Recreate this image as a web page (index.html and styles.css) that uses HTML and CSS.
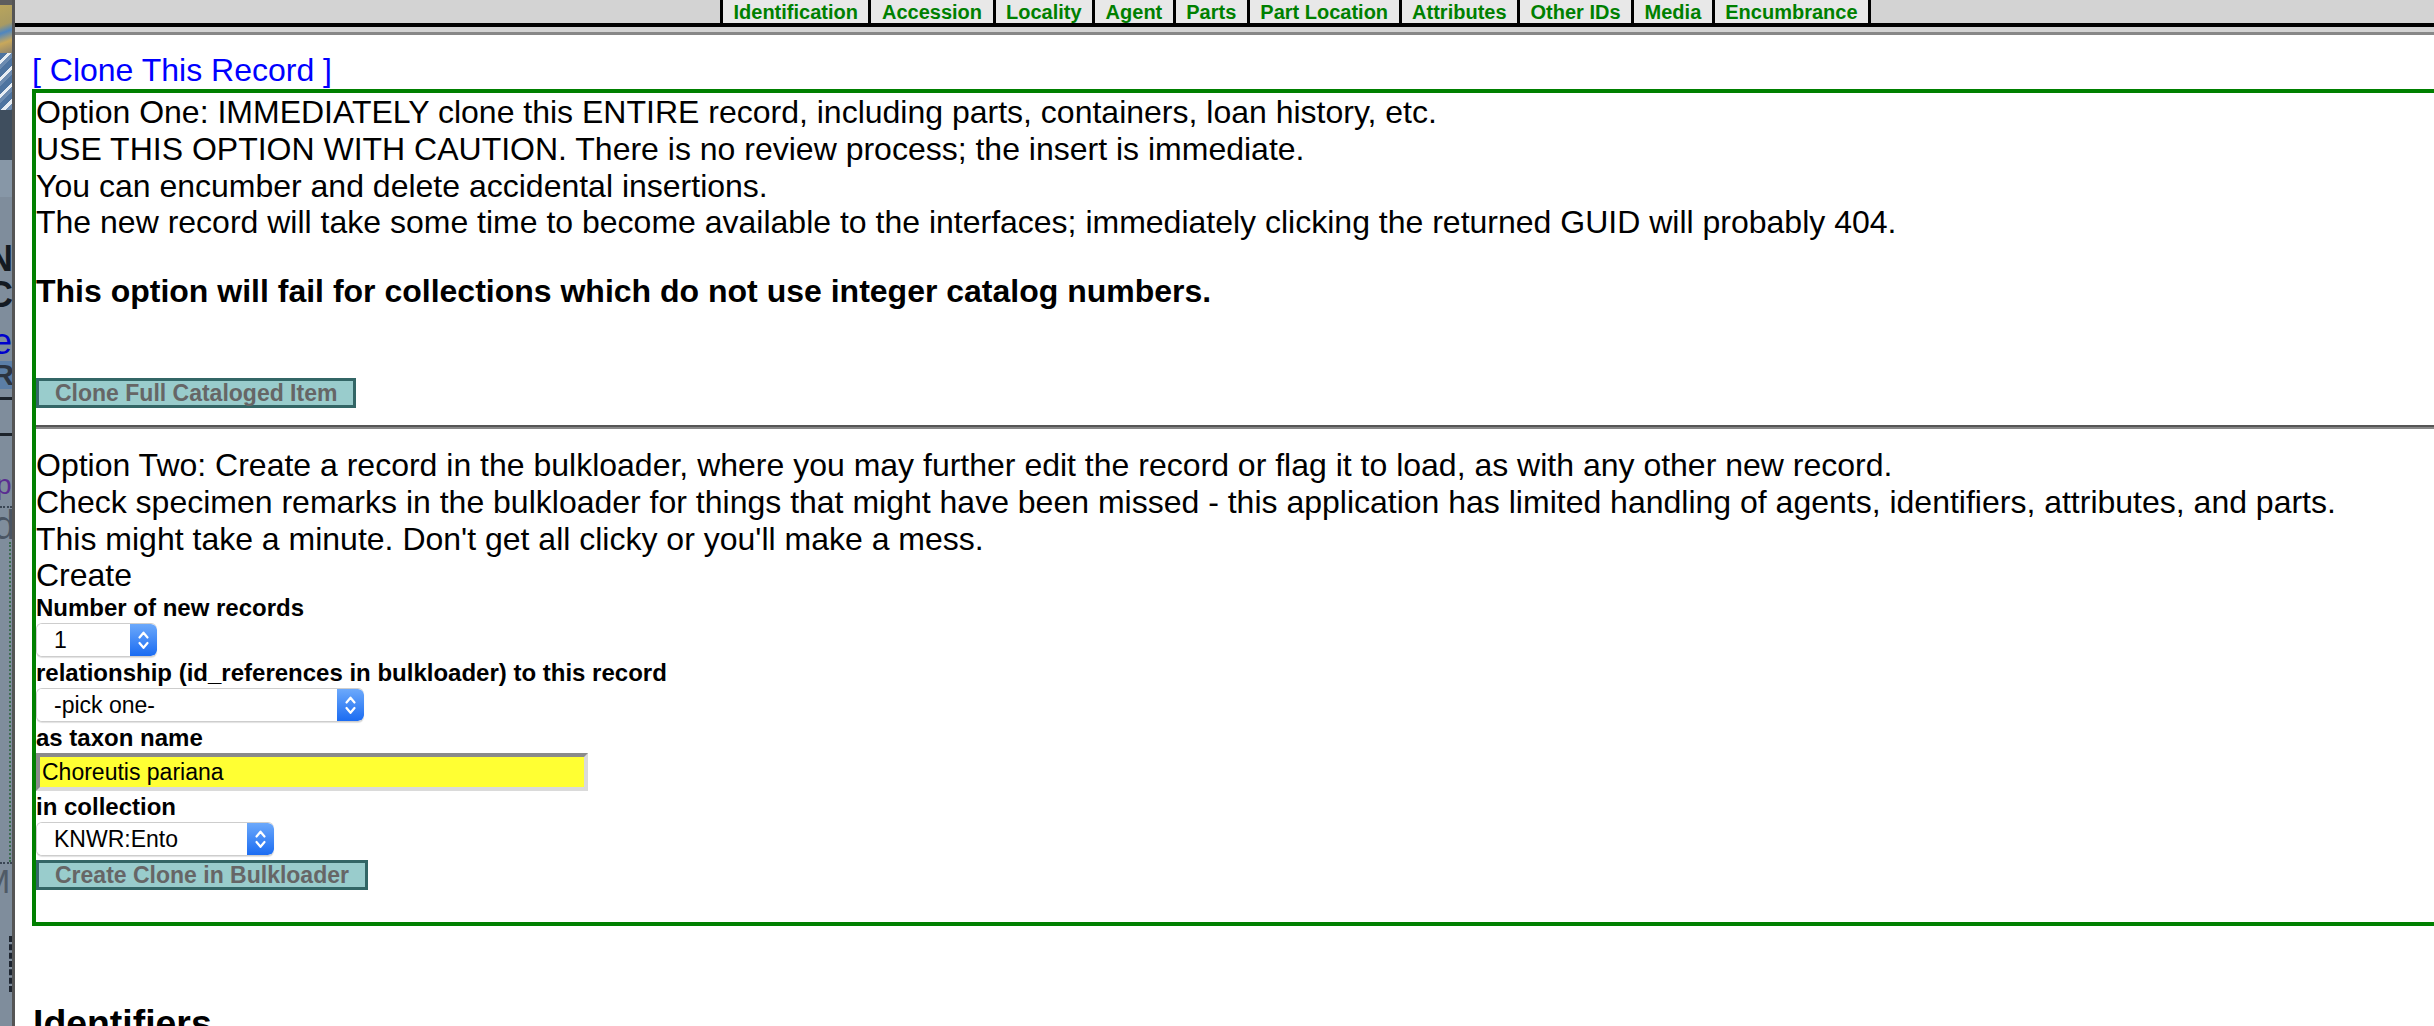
FILE: index.html
```html
<!DOCTYPE html>
<html lang="en">
<head>
<meta charset="utf-8">
<title>Clone This Record</title>
<link rel="stylesheet" href="styles.css">
</head>
<body>
<div class="under">
  <div class="u-dark"></div>
  <div class="u-photo1"></div>
  <div class="u-photo2"></div>
  <div class="u-slate"></div>
  <div class="u-band"></div>
  <div class="u-text">
    <div class="u-h">N</div>
    <div class="u-h">C</div>
    <div class="u-link">e</div>
    <div class="u-btn">R</div>
    <div class="u-rule"></div>
    <div class="u-rule u-rule2"></div>
    <div class="u-xp">xp</div>
    <div class="u-dots"></div>
    <div class="u-d">d</div>
    <div class="u-vdots"></div>
    <div class="u-dots u-dots2"></div>
    <div class="u-m">M</div>
    <div class="u-dash"></div>
  </div>
</div>
<div class="modal">
  <div class="topbar">
    <nav class="tabs">
      <a class="tab" href="#">Identification</a>
      <a class="tab" href="#">Accession</a>
      <a class="tab" href="#">Locality</a>
      <a class="tab" href="#">Agent</a>
      <a class="tab" href="#">Parts</a>
      <a class="tab" href="#">Part Location</a>
      <a class="tab" href="#">Attributes</a>
      <a class="tab" href="#">Other IDs</a>
      <a class="tab" href="#">Media</a>
      <a class="tab" href="#">Encumbrance</a>
    </nav>
  </div>
  <div class="content">
    <a class="clone-link" href="#">[ Clone This Record ]</a>
    <div class="box">
      <div class="text">
        Option One: IMMEDIATELY clone this ENTIRE record, including parts, containers, loan history, etc.<br>
        USE THIS OPTION WITH CAUTION. There is no review process; the insert is immediate.<br>
        You can encumber and delete accidental insertions.<br>
        The new record will take some time to become available to the interfaces; immediately clicking the returned GUID will probably 404.
      </div>
      <p class="warn">This option will fail for collections which do not use integer catalog numbers.</p>
      <form class="form-one">
        <button type="button" class="btn">Clone Full Cataloged Item</button>
      </form>
      <hr class="sep">
      <div class="text">
        Option Two: Create a record in the bulkloader, where you may further edit the record or flag it to load, as with any other new record.<br>
        Check specimen remarks in the bulkloader for things that might have been missed - this application has limited handling of agents, identifiers, attributes, and parts.<br>
        This might take a minute. Don't get all clicky or you'll make a mess.<br>
        Create
      </div>
      <form class="form-two">
        <label class="lbl" for="num">Number of new records</label>
        <span class="select w-num">
          <select id="num" class="select-el"><option>1</option></select>
          <span class="stepper"><svg viewBox="0 0 27 32" width="27" height="32"><path d="M9.5 13.5 L13.5 8.7 L17.5 13.5"/><path d="M9.5 19 L13.5 23.8 L17.5 19"/></svg></span>
        </span>
        <label class="lbl" for="rel">relationship (id_references in bulkloader) to this record</label>
        <span class="select w-rel">
          <select id="rel" class="select-el"><option>-pick one-</option></select>
          <span class="stepper"><svg viewBox="0 0 27 32" width="27" height="32"><path d="M9.5 13.5 L13.5 8.7 L17.5 13.5"/><path d="M9.5 19 L13.5 23.8 L17.5 19"/></svg></span>
        </span>
        <label class="lbl" for="taxon">as taxon name</label>
        <input id="taxon" class="taxon" type="text" value="Choreutis pariana">
        <label class="lbl" for="coll">in collection</label>
        <span class="select w-coll">
          <select id="coll" class="select-el"><option>KNWR:Ento</option></select>
          <span class="stepper"><svg viewBox="0 0 27 32" width="27" height="32"><path d="M9.5 13.5 L13.5 8.7 L17.5 13.5"/><path d="M9.5 19 L13.5 23.8 L17.5 19"/></svg></span>
        </span>
        <button type="button" class="btn btn-two">Create Clone in Bulkloader</button>
      </form>
    </div>
    <h3 class="section">Identifiers</h3>
  </div>
</div>
</body>
</html>
```

FILE: styles.css
```css
html, body {
  margin: 0;
  padding: 0;
}

body {
  display: flex;
  height: 1026px;
  overflow: hidden;
  background: #fff;
  color: #000;
  font-family: "Liberation Sans", Arial, sans-serif;
  font-size: 32px;
  line-height: 1.15;
}

/* ---------- strip of the page underneath the modal ---------- */
.under {
  flex: none;
  width: 12px;
  overflow: hidden;
  display: flex;
  flex-direction: column;
  background: #7f8d9c;
}

.u-dark { height: 5px; background: #5e5e5e; flex: none; }
.u-photo1 {
  height: 48px;
  flex: none;
  background: linear-gradient(160deg, #b9a55c 0%, #a89a62 40%, #4f86c0 55%, #c9a85a 75%, #8a8270 100%);
}
.u-photo2 {
  height: 57px;
  flex: none;
  background: repeating-linear-gradient(135deg, #4e74a0 0 5px, #e7edf3 5px 8px, #6c8bb0 8px 12px);
}
.u-slate { height: 50px; flex: none; background: #3f4e5e; }
.u-band { height: 37px; flex: none; background: #8797a7; }

.u-text {
  flex: 1;
  padding-top: 44px;
  font-weight: bold;
}
.u-h {
  width: 26px;
  margin-left: -13px;
  font-size: 36px;
  line-height: 36px;
  color: #141a22;
}
.u-link {
  width: 20px;
  margin-left: -8px;
  margin-top: 14px;
  font-weight: normal;
  font-size: 36px;
  line-height: 30px;
  color: #0000cc;
}
.u-btn {
  width: 24px;
  margin-left: -10px;
  margin-top: 4px;
  height: 28px;
  background: #5b7ea6;
  color: #2b3440;
  font-size: 30px;
  line-height: 28px;
  text-align: right;
}
.u-rule { height: 3px; margin-top: 8px; background: #1c232b; }
.u-rule2 { margin-top: 33px; }
.u-xp {
  width: 30px;
  margin-left: -18px;
  margin-top: 36px;
  font-weight: normal;
  font-size: 28px;
  line-height: 26px;
  color: #5a2d91;
}
.u-dots {
  height: 0;
  margin-top: 8px;
  border-top: 2px dotted #3a4654;
}
.u-d {
  width: 20px;
  margin-left: -7px;
  font-weight: normal;
  font-size: 40px;
  line-height: 34px;
  color: #4a5563;
}
.u-vdots {
  height: 320px;
  margin-left: 9px;
  border-left: 2px dotted #3b6d4f;
}
.u-dots2 { margin-top: 0; }
.u-m {
  width: 30px;
  margin-left: -18px;
  margin-top: 2px;
  font-weight: normal;
  font-size: 34px;
  line-height: 30px;
  color: #4f5a66;
}
.u-dash {
  height: 56px;
  margin-top: 40px;
  margin-left: 9px;
  border-left: 3px dashed #1d2530;
}

/* ---------- modal ---------- */
.modal {
  flex: 1;
  min-width: 0;
  overflow: hidden;
  border-left: 3px solid #555;
  background: #fff;
}

.topbar {
  background: #d3d3d3;
  padding-bottom: 5px;
  border-bottom: 3px solid #888;
}

.tabs {
  display: flex;
  padding-left: 705px;
  border-bottom: 4px solid #000;
}

.tab {
  display: block;
  height: 23px;
  padding: 0 10.5px;
  background: #e8e8e8;
  border-left: 3px solid #000;
  color: #008000;
  font-size: 20px;
  font-weight: bold;
  line-height: 24px;
  text-decoration: none;
  white-space: nowrap;
}
.tab:last-child { border-right: 3px solid #000; }

.content {
  padding: 17px 0 0 18px;
}

.clone-link {
  display: block;
  color: #0000ff;
  text-decoration: none;
  line-height: 37px;
  margin-left: -1px;
}

.box {
  width: 2460px;
  margin-left: -1px;
  padding: 1px 0 32px 0;
  border: 4px solid #008000;
  border-right: 0;
}

.text {
  white-space: nowrap;
  line-height: 36.8px;
}

.warn {
  margin: 32px 0;
  font-weight: bold;
  line-height: 36.8px;
}

.form-one {
  margin-top: 68px;
}

.btn {
  display: block;
  box-sizing: border-box;
  height: 30px;
  margin: 0;
  padding: 0 16px;
  background: #99cccc;
  border: 3px solid #336666;
  border-radius: 0;
  color: #666;
  font-family: "Liberation Sans", Arial, sans-serif;
  font-size: 23px;
  font-weight: bold;
  line-height: 24px;
}

.sep {
  height: 0;
  margin: 17px 0 18px;
  border: 0;
  border-top: 2px solid #555;
  border-bottom: 2px solid #888;
}

.lbl {
  display: block;
  font-size: 24px;
  font-weight: bold;
  line-height: 27.6px;
}

.select {
  display: flex;
  box-sizing: border-box;
  height: 34px;
  margin: 1px 0 2.5px;
  border: 1px solid #cdcdcd;
  border-right: 0;
  border-radius: 6px;
  overflow: hidden;
  background: #fff;
  box-shadow: 0 1px 1px rgba(0, 0, 0, 0.12);
}
.w-num { width: 121px; }
.w-rel { width: 328px; }
.w-coll { width: 238px; }

.select-el {
  flex: 1;
  min-width: 0;
  height: 100%;
  margin: 0;
  padding: 0 0 0 17px;
  border: 0;
  outline: 0;
  background: #fff;
  color: #000;
  font-family: "Liberation Sans", Arial, sans-serif;
  font-size: 23px;
  -webkit-appearance: none;
  appearance: none;
}

.stepper {
  flex: none;
  width: 27px;
  height: 100%;
  border-radius: 0 6px 6px 0;
  background: linear-gradient(#6ca9fb, #1b6cf2);
}
.stepper svg {
  display: block;
  width: 27px;
  height: 32px;
  fill: none;
  stroke: #fff;
  stroke-width: 2.2;
  stroke-linecap: round;
  stroke-linejoin: round;
}

.taxon {
  display: block;
  box-sizing: border-box;
  width: 552px;
  height: 38px;
  margin: 1.5px 0 2px;
  padding: 0 2px;
  border: 4px solid;
  border-color: #8a8a8a #dadada #dadada #8a8a8a;
  background: #ffff33;
  color: #000;
  font-family: "Liberation Sans", Arial, sans-serif;
  font-size: 23px;
  outline: 0;
}

.btn-two {
  margin-top: 4px;
}

.section {
  margin: 76px 0 0;
  font-size: 37.4px;
  font-weight: bold;
  line-height: 43px;
}
```
